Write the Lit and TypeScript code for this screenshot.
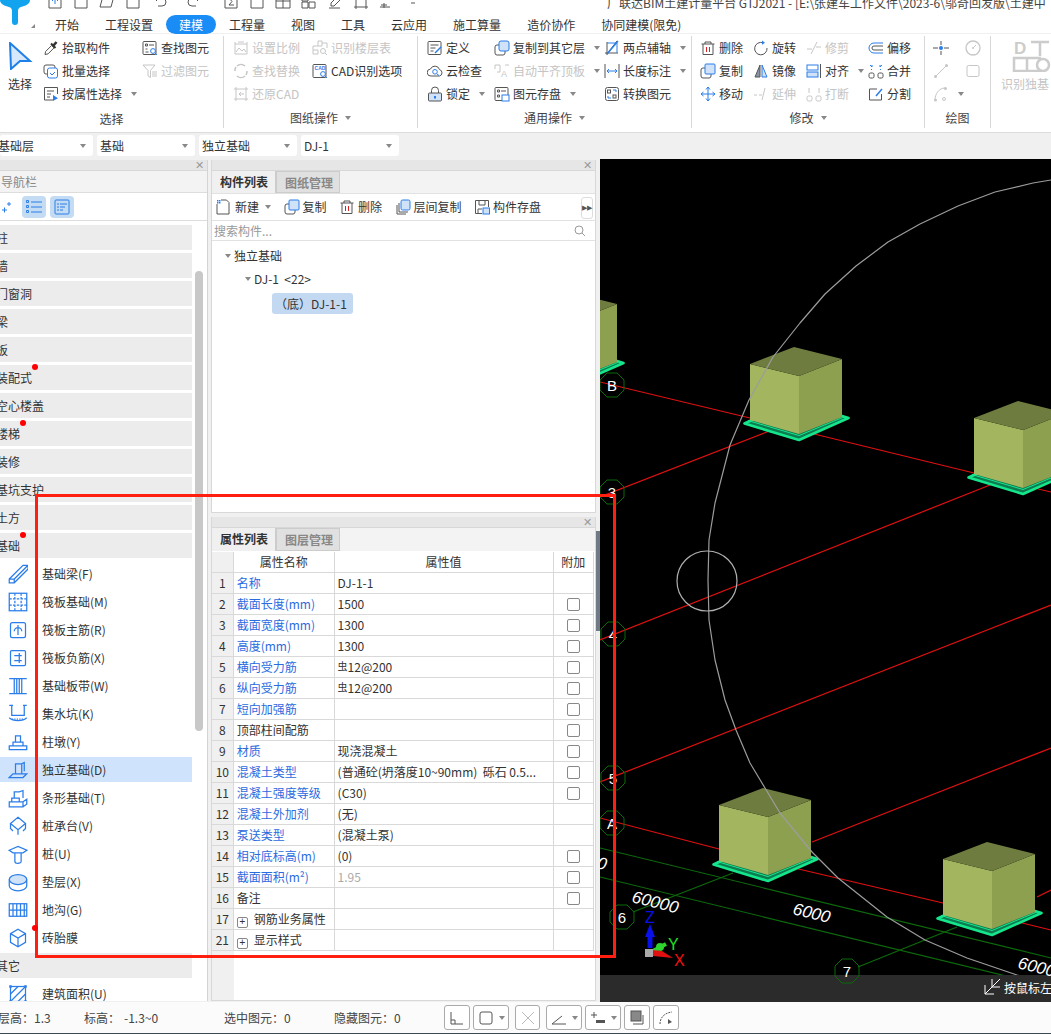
import { LitElement, html, css, svg } from "lit";
import { customElement } from "lit/decorators.js";

const B = "#2b7de9", D = "#555", G = "#c6c6c6", L = "#cfe2f8";
const ic = (body: unknown, size = 16) => html`<svg class="i" width=${size} height=${size} viewBox="0 0 16 16">${body}</svg>`;

const icons: Record<string, unknown> = {
  pick: svg`<path d="M2 14.5l.6-3 6-6 2.4 2.4-6 6z" stroke=${D}/><path d="M8 3.5l4.5 4.5" stroke="#333" stroke-width="2"/><path d="M10.5 5.5l3-3.5" stroke="#333" stroke-width="2.6"/>`,
  batch: svg`<rect x="1" y="2" width="11" height="9" rx="2" stroke=${D}/><rect x="4.5" y="5" width="10" height="10" rx="2" fill="#fff" stroke=${B}/><path d="M7 10l2 2 3-3" stroke=${B}/>`,
  prop: svg`<path d="M10 14H1.5V1.5h13V8" stroke=${D}/><path d="M4 5h7M4 8h4M4 11h3" stroke=${D}/><path d="M10 9l5 3.2-5 2.8z" fill=${B}/>`,
  find: svg`<rect x="1" y="1.5" width="13" height="13" rx="1" stroke=${D}/><path d="M3.5 4h2v2h-2zM7 5h5M3.5 9h2M3.5 12h3" stroke=${D}/><circle cx="11" cy="11" r="2.4" fill="#fff" stroke=${B}/><path d="M13 13l2 2" stroke=${B}/>`,
  filter: svg`<path d="M1 2h12L8.5 7.5v7L6 13V7.5z" stroke=${G}/><path d="M10 9h5M10 11h5M10 13h5" stroke=${G}/>`,
  scale: svg`<path d="M2 4h12v10H2zM2 2v2M14 2v2M5 2h6" stroke=${G}/><path d="M3 12l3-4 3 3 2-2 2 3" stroke=${G}/>`,
  layer: svg`<path d="M1 14V6h5M1 10h5v4H1M6 1h4v5H6zM10 3h5v5" stroke=${G}/><circle cx="11" cy="11" r="2.5" stroke=${G}/><path d="M13 13l2 2" stroke=${G}/>`,
  rep: svg`<path d="M12 3a6 6 0 0 0-8 0M4 13a6 6 0 0 0 8 0M2 8a6 6 0 0 1 1-4M14 8a6 6 0 0 1-1 4" stroke=${G} stroke-width="1.5"/>`,
  cadopt: svg`<rect x="1" y="1.5" width="13" height="13" rx="1" stroke=${D}/><text x="2.6" y="7" font-size="5" font-weight="700" fill=${B} stroke="none" font-family="Liberation Sans">CAD</text><circle cx="11" cy="11" r="2.4" fill="#fff" stroke=${B}/><path d="M13 13l2 2" stroke=${B}/>`,
  restore: svg`<path d="M3 1v14M13 1v14M1 3h14M1 13h14" stroke=${G}/><path d="M11 8H6l2-2M6 8l2 2" stroke=${G}/>`,
  define: svg`<rect x="1" y="1.5" width="13" height="13" rx="1" stroke=${D}/><path d="M3.5 5h8M3.5 8h5M3.5 11h3" stroke=${D}/><path d="M8 13l6-6" stroke=${B} stroke-width="1.5"/>`,
  cloud: svg`<path d="M4 13a3.5 3.5 0 0 1-.5-7 4.8 4.8 0 0 1 9 .6A3.3 3.3 0 0 1 12.5 13z" stroke=${D}/><circle cx="8" cy="8.8" r="2.3" stroke=${B}/><path d="M10 11l2 1.5" stroke=${B}/>`,
  lock: svg`<rect x="1.5" y="7" width="13" height="8" rx="1" fill=${L} stroke=${D}/><path d="M4.5 7V4.5a3.5 3.5 0 0 1 7 0V7" stroke=${D}/><path d="M8 10v2.5" stroke=${B} stroke-width="2"/>`,
  copyto: svg`<rect x="1" y="5" width="10" height="10" rx="2" stroke=${D}/><rect x="5" y="1" width="10" height="10" rx="2" fill=${L} stroke=${B}/>`,
  autotop: svg`<path d="M1 2h5v7M11 2h4M1 2v4M3 9h3" stroke=${G}/><text x="7" y="14" font-size="9" fill=${G} stroke="none" font-family="Liberation Sans">A</text>`,
  store: svg`<rect x="1" y="1.5" width="13" height="13" rx="1" stroke=${D}/><path d="M3.5 4h2v2h-2zM7 5h5M3.5 9h2v2h-2z" stroke=${D}/><rect x="8" y="9" width="7" height="6" fill="#fff" stroke=${B}/>`,
  axis2: svg`<path d="M1 13h13M3 2v13M13 1L3 14" stroke=${D}/><path d="M3 14L14 1" stroke=${B} stroke-width="1.5"/><path d="M3 3h10v10" stroke=${B}/>`,
  dim: svg`<path d="M1 1v14M15 1v14" stroke=${D}/><path d="M3 8h10M3 8l2-2M3 8l2 2M13 8l-2-2M13 8l-2 2" stroke=${B}/>`,
  conv: svg`<rect x="1.5" y="1.5" width="13" height="13" rx="2" stroke=${D}/><rect x="3.5" y="4" width="3" height="3" stroke=${D}/><rect x="9" y="9" width="3" height="3" stroke=${D}/><path d="M9 4h3v2M7 12H4v-2" stroke=${B}/>`,
  del: svg`<path d="M1.5 4h13M5 4V2h6v2M3 4v10.5h10V4" stroke=${D}/><path d="M6.5 7v5M9.5 7v5" stroke="#d22"/>`,
  rot: svg`<path d="M10 2.8A6.2 6.2 0 1 0 14 8" stroke=${D}/><path d="M9 .5l3 2.3-3 2z" fill=${B}/>`,
  trim: svg`<path d="M1 9h5M10 7h5M5 14L11 2" stroke=${G}/>`,
  offs: svg`<path d="M15 3H6a5 5 0 0 0 0 10h9" stroke=${B}/><path d="M15 6H6a2 2 0 0 0 0 4h9" stroke=${D}/>`,
  copy: svg`<rect x="1" y="5" width="10" height="10" rx="2" stroke=${D}/><rect x="5" y="1" width="10" height="10" rx="1" fill=${L} stroke=${B}/>`,
  mirror: svg`<path d="M7 2L2 14h5z" fill="#8894a8" stroke=${D}/><path d="M9 2l5 12H9z" fill=${L} stroke=${B}/>`,
  align: svg`<path d="M14.5 1v14" stroke=${D}/><rect x="1" y="2" width="11" height="5" stroke=${B}/><rect x="1" y="9" width="11" height="5" fill=${L} stroke=${B}/>`,
  merge: svg`<rect x="1" y="10" width="5" height="5" rx="1.5" stroke=${D}/><rect x="10" y="10" width="5" height="5" rx="1.5" stroke=${D}/><path d="M2 2l2 2v-2M14 2l-2 2v-2" stroke=${B}/><path d="M3 6.5h1M12 6.5h1" stroke=${B}/>`,
  move: svg`<path d="M8 1v14M1 8h14M8 1L6 3.5M8 1l2 2.5M8 15l-2-2.5M8 15l2-2.5M1 8l2.5-2M1 8l2.5 2M15 8l-2.5-2M15 8l-2.5 2" stroke=${B}/>`,
  ext: svg`<path d="M1 9h3M6 9h3M12 2L9 14" stroke=${G}/>`,
  brk: svg`<rect x="1" y="10" width="5" height="5" rx="1.5" stroke=${G}/><rect x="10" y="10" width="5" height="5" rx="1.5" stroke=${G}/><path d="M3 2v5M13 2v5" stroke=${G}/>`,
  split: svg`<path d="M9 3H1.5v11h12V8" stroke=${D}/><path d="M8 10l6-7" stroke=${B} stroke-width="1.5"/>`,
  point: svg`<path d="M0 8h5M11 8h5M8 1v4M8 11v4" stroke=${D}/><circle cx="8" cy="8" r="2" fill=${B}/>`,
  clock: svg`<circle cx="8" cy="8" r="7" stroke=${G} stroke-width="1.3"/><path d="M8 8l3-3" stroke=${G}/><circle cx="8" cy="8" r="1" fill=${G}/>`,
  lineg: svg`<path d="M2 14L14 2" stroke=${G}/><circle cx="2.5" cy="13.5" r="1.5" fill=${G}/><circle cx="13.5" cy="2.5" r="1.5" fill=${G}/>`,
  rectg: svg`<rect x="2" y="2.5" width="12" height="11" rx="1.5" stroke=${G}/>`,
  arcg: svg`<path d="M2 14C2 8 6 2 12 2" stroke=${G}/><circle cx="2.5" cy="14" r="1.5" fill=${G}/><circle cx="12.5" cy="2.5" r="1.5" fill=${G}/><circle cx="11" cy="13" r="1.5" stroke=${G}/>`,
  newf: svg`<path d="M1 5v10h12V3.5L10.5 1H5" stroke=${D}/><path d="M1 1h1.5v1.5H1zM3 1h1.5v1.5H3zM1 3h1.5v1.5H1zM3 3h1.5v1.5H3z" fill=${B}/>`,
  lcopy: svg`<path d="M2 6v9h9M4 4v9h9" stroke=${D}/><rect x="6" y="1" width="9" height="10" rx="1.5" fill=${L} stroke=${B}/>`,
  cstore: svg`<path d="M8 14.5H1.5v-13h13V8M5 1.5V6h6V1.5M4 14v-4h4" stroke=${D}/><rect x="9" y="9" width="6.5" height="6" fill=${L} stroke=${B}/>`,
};

const N: Record<string, unknown> = {
  beam: svg`<path d="M1 12L12 1h4v3L5 15H1zM1 12h4v3M5 12L16 1" stroke=${B}/>`,
  raft: svg`<rect x="1" y="1" width="14" height="14" stroke=${B}/><path d="M1 5.5h14M1 10.5h14M5.5 1v14M10.5 1v14" stroke=${B} stroke-dasharray="2 1"/>`,
  rmain: svg`<rect x="2" y="2" width="12" height="12" rx="1.5" stroke=${B}/><path d="M8 4v8M5 9a3 3 0 1 1 6 0" stroke=${B}/>`,
  rneg: svg`<rect x="2" y="2" width="12" height="12" rx="1" stroke=${B}/><path d="M5 6h6M5 10h6M9 4v8" stroke=${B}/>`,
  strip: svg`<path d="M1 2h14M1 14h14M5 2v12M11 2v12M7 2v12M9 2v12" stroke=${B}/>`,
  pit: svg`<path d="M3 1v8h10V1M1 1h3M12 1h3M1 11c3 3 11 3 14 0" stroke=${B}/><path d="M3 12h10" stroke=${B} stroke-dasharray="1 1"/>`,
  pier: svg`<path d="M1 14h14v-3H1zM4 11V8h8v3M6 8V3h4v5" stroke=${B}/>`,
  ind: svg`<path d="M1 14l3-3h11l-3 3zM6 11V3h5v8M11 3l2-1v7" stroke=${B} fill=${L}/>`,
  str: svg`<path d="M1 15V11h11v4zM12 11l3-2v4l-3 2M3 11V8h6v3M5 8V3h4l3-1v6" stroke=${B}/>`,
  cap: svg`<path d="M8 1l6 5-6 5-6-5zM2 6v4l2 2M14 6v4l-2 2M8 11v4" stroke=${B}/>`,
  pile: svg`<path d="M1 5l7-3 7 3-3 2H4zM5.5 7v7a2.5 1.5 0 0 0 5 0V7" stroke=${B}/>`,
  pad: svg`<ellipse cx="8" cy="6" rx="7" ry="4" fill=${L} stroke=${B}/><path d="M1 6v5c0 2 3 4 7 4s7-2 7-4V6" stroke=${B}/>`,
  ditch: svg`<rect x="1" y="3" width="14" height="10" stroke=${B}/><path d="M1 8h14M4 3v10M7 3v10M10 3v10M13 3v10" stroke=${B}/>`,
  brick: svg`<path d="M8 1l6 3.5v7L8 15l-6-3.5v-7zM2 4.5l6 3.5 6-3.5M8 8v7" stroke=${B}/>`,
  area: svg`<rect x="2" y="2" width="12" height="12" stroke=${B}/><path d="M2 8l6-6M2 14L14 2M8 14l6-6" stroke=${B}/><path d="M1 1h2v2H1zM13 1h2v2h-2zM1 13h2v2H1zM13 13h2v2h-2z" fill=${B}/>`,
};

type It = [string, string, boolean?, boolean?];
const groups: { cls: string; label: string; caret?: boolean; items: (It | null)[] }[] = [
  { cls: "g1", label: "选择", items: [["pick", "拾取构件"], ["find", "查找图元"], ["batch", "批量选择"], ["filter", "过滤图元", true], ["prop", "按属性选择", false, true], null] },
  { cls: "g2", label: "图纸操作", caret: true, items: [["scale", "设置比例", true], ["layer", "识别楼层表", true], ["rep", "查找替换", true], ["cadopt", "CAD识别选项"], ["restore", "还原CAD", true], null] },
  { cls: "g3", label: "通用操作", caret: true, items: [["define", "定义"], ["copyto", "复制到其它层", false, true], ["axis2", "两点辅轴", false, true], ["cloud", "云检查"], ["autotop", "自动平齐顶板", true, true], ["dim", "长度标注", false, true], ["lock", "锁定", false, true], ["store", "图元存盘", false, true], ["conv", "转换图元"]] },
  { cls: "g4", label: "修改", caret: true, items: [["del", "删除"], ["rot", "旋转"], ["trim", "修剪", true], ["offs", "偏移"], ["copy", "复制"], ["mirror", "镜像"], ["align", "对齐", false, true], ["merge", "合并"], ["move", "移动"], ["ext", "延伸", true], ["brk", "打断", true], ["split", "分割"]] },
];

const cats1 = ["柱", "墙", "门窗洞", "梁", "板", "装配式", "空心楼盖", "楼梯", "装修", "基坑支护", "土方", "基础"];
const dotted = new Set(["装配式", "楼梯", "基础"]);
const subs: [string, string][] = [["beam", "基础梁(F)"], ["raft", "筏板基础(M)"], ["rmain", "筏板主筋(R)"], ["rneg", "筏板负筋(X)"], ["strip", "基础板带(W)"], ["pit", "集水坑(K)"], ["pier", "柱墩(Y)"], ["ind", "独立基础(D)"], ["str", "条形基础(T)"], ["cap", "桩承台(V)"], ["pile", "桩(U)"], ["pad", "垫层(X)"], ["ditch", "地沟(G)"], ["brick", "砖胎膜"]];

type Row = [string, string, string, boolean, string?];
const rows: Row[] = [
  ["1", "名称", "DJ-1-1", false, "b"], ["2", "截面长度(mm)", "1500", true, "b"], ["3", "截面宽度(mm)", "1300", true, "b"], ["4", "高度(mm)", "1300", true, "b"],
  ["5", "横向受力筋", "#12@200", true, "b"], ["6", "纵向受力筋", "#12@200", true, "b"], ["7", "短向加强筋", "", true, "b"], ["8", "顶部柱间配筋", "", true],
  ["9", "材质", "现浇混凝土", true, "b"], ["10", "混凝土类型", "(普通砼(坍落度10~90mm)\u00a0\u00a0砾石 0.5...", true, "b"], ["11", "混凝土强度等级", "(C30)", true, "b"], ["12", "混凝土外加剂", "(无)", false, "b"],
  ["13", "泵送类型", "(混凝土泵)", false, "b"], ["14", "相对底标高(m)", "(0)", true, "b"], ["15", "截面面积(m²)", "~1.95", true, "b"], ["16", "备注", "", true],
  ["17", "+钢筋业务属性", "", false], ["21", "+显示样式", "", false],
];

const box = (dx: number, dy: number) => svg`<g transform="translate(${dx} ${dy})">
  <polygon points="744.5,423.5 799,440 848.5,418 793,401" fill="#0d7a50" stroke="#15e68c" stroke-width="2.6" stroke-linejoin="round"/>
  <polyline points="748,420.5 799,435.5 845,416.5" fill="none" stroke="#15e68c" stroke-width="1"/>
  <polygon points="750,364 799,376 799,434 750,420" fill="#a3b55f"/>
  <polygon points="799,376 842,359 842,417 799,434" fill="#8da050"/>
  <polygon points="750,364 794,347 842,359 799,376" fill="#6f7c3f"/></g>`;
const axis = (x: number, y: number, t: string) => svg`<polygon points="${x - 12},${y - 5} ${x - 5},${y - 12} ${x + 5},${y - 12} ${x + 12},${y - 5} ${x + 12},${y + 5} ${x + 5},${y + 12} ${x - 5},${y + 12} ${x - 12},${y + 5}" fill="none" stroke="#0b6a0b"/><text x=${x} y=${y + 6} class="lab" text-anchor="middle">${t}</text>`;

@customElement("app-root")
export class AppRoot extends LitElement {
  static styles = css`
    :host { display:block; position:relative; width:1051px; height:1034px; overflow:hidden; background:#f0f0f0; font:12px/16px "Noto Sans CJK SC","Liberation Sans",sans-serif; color:#333; }
    .i { fill:none; flex:none; display:block; }
    .head { display:grid; grid-template-columns:42px 1fr; grid-template-rows:15px 18px; background:#fff; height:33px; }
    .logo { grid-row:1 / 3; overflow:hidden; }
    .qa { display:flex; height:15px; overflow:hidden; }
    .qaicons { display:flex; gap:10px; width:565px; padding-left:5px; margin-top:-6px; box-sizing:border-box; flex:none; }
    .qaicons .wide { margin-right:10px; }
    .title { white-space:nowrap; margin-top:-5px; line-height:16px; color:#444; }
    .tabs { display:flex; }
    .tab { padding:0 13px; line-height:19px; height:19px; border-radius:10px; color:#333; white-space:nowrap; position:relative; z-index:1; }
    .tab.on { background:#1a8cf5; color:#fff; }
    .ribbon { height:98px; background:#fff; display:flex; border-bottom:1px solid #dcdcdc; border-top:1px solid #f0f0f0; overflow:hidden; }
    .group { flex:none; position:relative; box-sizing:border-box; height:92px; margin-top:2px; border-right:1px solid #d8d8d8; display:flex; flex-direction:column; }
    .cols { display:grid; grid-auto-rows:23px; height:72px; padding-top:0; }
    .lbl { text-align:center; display:flex; justify-content:center; align-items:center; gap:5px; height:22px; margin-top:2px; color:#444; font-size:12px; }
    .g0 { width:224px; } .g2 { width:194px; } .g3 { width:274px; } .g4 { width:233px; } .g5 { width:66px; } .g6 { width:60px; border:none; }
    .g1body { display:flex; }
    .bigsel { width:44px; display:flex; flex-direction:column; align-items:flex-start; padding-left:8px; box-sizing:border-box; }
    .bigsel svg { margin-left:1px; margin-top:6px; }
    .bigsel span { margin-top:6px; }
    .g1 { grid-template-columns:99px 81px; }
    .g2 .cols { grid-template-columns:79px 105px; padding-left:9px; }
    .g3 .cols { grid-template-columns:67px 110px 88px; padding-left:9px; }
    .g4 .cols { grid-template-columns:53px 53px 62px 60px; padding-left:8px; }
    .g5 .cols { grid-template-columns:32px 32px; padding-left:8px; }
    .g5 .cols > * { align-self:center; }
    .item { display:flex; align-items:center; gap:3px; white-space:nowrap; color:#333; }
    .item.off { color:#c4c4c4; }
    .car { width:0; height:0; border-left:3.5px solid transparent; border-right:3.5px solid transparent; border-top:4px solid #888; flex:none; margin-left:6px; }
    .lbl .car { margin-left:2px; }
    .g6 { align-items:flex-start; padding-left:10px; color:#c4c4c4; overflow:hidden; white-space:nowrap; }
    .g6 svg { margin:4px 0 4px 2px; }
    .bar { height:24px; padding-top:2px; box-sizing:content-box; display:flex; gap:4px; background:#f0f0f0; }
    .combo { background:#fff; border-radius:3px; width:98px; height:21px; box-sizing:border-box; display:flex; align-items:center; justify-content:space-between; padding:0 7px 0 3px; }
    .combo.first { width:93px; margin-right:0; padding-left:0; text-indent:-2px; }
    .body { display:flex; height:843px; padding-top:1px; box-sizing:border-box; }
    .left { width:207px; flex:none; border-right:1px solid #d4d4d4; display:flex; flex-direction:column; background:#fff; height:841px; }
    .gut { width:3px; flex:none; }
    .pbar { height:10px; background:#e6e6e6; display:flex; justify-content:flex-end; align-items:center; padding-right:3px; color:#999; font-size:11px; line-height:10px; flex:none; border-bottom:1px solid #d8d8d8; font-family:"Liberation Sans",sans-serif; }
    .navh { height:21px; line-height:21px; background:#f3f3f3; color:#888; text-indent:1px; border-bottom:1px solid #ddd; flex:none; font-size:12px; }
    .navt { height:27px; border-bottom:1px solid #ddd; display:flex; align-items:center; gap:4px; padding-left:1px; flex:none; box-sizing:content-box; }
    .navb { width:24px; height:22px; background:#c3dbf3; border-radius:4px; display:flex; align-items:center; justify-content:center; }
    .plus { width:17px; }
    .listw { flex:1; display:flex; overflow:hidden; padding-top:4px; }
    .list { width:192px; flex:none; display:flex; flex-direction:column; gap:3px; }
    .cat { height:25px; line-height:25px; background:#ececec; text-indent:-4px; flex:none; position:relative; white-space:nowrap; }
    .dot { position:absolute; width:6px; height:6px; border-radius:3px; background:#f00; top:-1px; }
    .sub { height:25px; flex:none; display:flex; align-items:center; gap:14px; padding-left:8px; position:relative; }
    .sub.on { background:#cfe4fc; }
    .track { width:8px; margin-left:3px; padding-top:46px; flex:none; }
    .thumb { height:460px; background:#c8c8c8; border-radius:4px; }
    .mid { width:385px; flex:none; display:flex; flex-direction:column; gap:4px; height:841px; }
    .panel { background:#fff; border:1px solid #d8d8d8; border-top:none; box-sizing:border-box; display:flex; flex-direction:column; }
    .p1 { height:353px; } .p2 { height:484px; }
    .tabsb { height:22px; display:flex; background:#f3f3f3; flex:none; }
    .p2 .tabsb { height:23px; }
    .tb { width:64px; box-sizing:border-box; padding-left:8px; line-height:21px; font-weight:700; border-right:1px solid #ccc; border-bottom:1px solid #ddd; }
    .tb.on { background:#f0f0f0; color:#333; border-bottom:none; }
    .tb.off { background:#e0e0e0; color:#888; border:1px solid #ccc; }
    .tools { height:28px; display:flex; align-items:center; gap:12.5px; padding-left:4px; border-bottom:1px solid #e2e2e2; flex:none; position:relative; border-top:1px solid #e2e2e2; box-sizing:border-box; }
    .tools .car { margin-left:3px; }
    .more { position:absolute; right:2px; top:3px; width:10px; height:20px; border:1px solid #ddd; border-radius:3px; color:#555; font-size:7px; line-height:20px; text-align:center; font-family:"Liberation Sans",sans-serif; }
    .search { height:19px; line-height:18px; color:#999; border-bottom:1px solid #e2e2e2; display:flex; justify-content:space-between; align-items:center; padding:0 9px 0 2px; flex:none; }
    .tree { padding-top:3px; display:flex; flex-direction:column; }
    .tr { height:23px; display:flex; align-items:center; gap:3px; white-space:nowrap; }
    .tr .car { margin:0; }
    .tr1 { padding-left:13px; } .tr2 { padding-left:33px; }
    .sel { margin-left:60px; width:81px; height:21px; line-height:21px; border-radius:3px; background:#c3d9f2; box-sizing:border-box; padding-left:3px; margin-top:3px; white-space:nowrap; }
    .tw { flex:1; display:flex; flex-direction:column; padding-right:2px; padding-top:1px; min-height:0; }
    table { border-collapse:collapse; table-layout:fixed; width:382px; flex:none; }
    td,th { border:1px solid #d9d9d9; font-weight:400; height:20px; padding:0; line-height:16px; white-space:nowrap; overflow:hidden; box-sizing:content-box; }
    thead th { height:20px; border-top:none; }
    td:first-child,th:first-child { background:#f0f0f0; text-align:center; border-left:none; }
    .nm { padding-left:3px; } .nm.b { color:#2b6be0; }
    .vl { padding-left:3px; } .vl.dim { color:#aaa; }
    .rb { font-size:10px; position:relative; top:-2px; }
    .ck { width:13px; height:13px; border:1px solid #888; border-radius:2px; background:#fff; margin:0 auto; box-sizing:border-box; }
    .pl { display:inline-block; width:11px; height:11px; border:1px solid #888; border-radius:2px; box-sizing:border-box; text-align:center; line-height:8px; font-size:10px; margin-right:6px; vertical-align:-1px; font-family:"Liberation Sans",sans-serif; }
    .tail { flex:1; width:22px; background:#f0f0f0; }
    .split { width:4px; flex:none; padding-top:371px; box-sizing:border-box; }
    .sthumb { height:100px; background:#6f7a86; position:relative; }
    .canvas { flex:none; width:451px; height:843px; display:block; margin-top:-1px; background:#000; }
    .lab { fill:#fff; font:15px "Liberation Sans",sans-serif; }
    .dimt { fill:#fff; font:italic 17px "Liberation Sans",sans-serif; }
    .gz { font:16px "Liberation Sans",sans-serif; }
    .hint { fill:#fff; font:12px "Noto Sans CJK SC",sans-serif; }
    .status { height:32px; background:#fbfbfb; border-bottom:1px solid #3a4a55; box-sizing:border-box; display:flex; align-items:center; white-space:nowrap; position:relative; }
    .st { color:#444; flex:none; }
    .st:nth-child(1) { width:34px; text-indent:-2px; } .st:nth-child(2) { width:50px; } .st:nth-child(3) { width:40px; } .st:nth-child(4) { width:100px; }
    .st:nth-child(5) { width:60px; } .st:nth-child(6) { width:50px; } .st:nth-child(7) { width:60px; } .st:nth-child(8) { width:50px; }
    .sb { height:25px; border:1px solid #aaa; border-radius:3px; box-sizing:border-box; display:flex; align-items:center; justify-content:center; gap:5px; flex:none; background:#fff; margin-right:3px; }
    .sb .car { margin:0; }
    .w1 { width:26px; } .w2 { width:36px; } .w3 { width:25px; margin-left:3px; margin-right:6px; } .w4 { width:36px; }
    .ann { position:absolute; left:35px; top:494px; width:581px; height:464px; box-sizing:border-box; border:3px solid #ff1e0f; pointer-events:none; }
    .annd { position:absolute; left:32px; top:925px; width:6px; height:6px; border-radius:3px; background:#f00; }
  `;

  private it(x: It | null) {
    if (!x) return html`<div></div>`;
    const [k, t, off, car] = x;
    return html`<div class="item ${off ? "off" : ""}">${ic(icons[k])}<span>${t}</span>${car ? html`<i class="car"></i>` : ""}</div>`;
  }

  render() {
    const qa = ["M2 1h12v13H2z|M8 10V5M5 7l3-3 3 3", "M2 1h12v13H2z", "M1 13l3-11h11l-3 11z", "M2 1h12v13H2z", "M3 4h8a3 3 0 0 1 0 8H7M3 4l3-3M3 4l3 3", "M13 4H5a3 3 0 0 0 0 8h4M13 4l-3-3M13 4l-3 3", "M2 1h12v13H2zM11 4H6l3 3.5L6 11h5", "M2 1h12v13H2zM5 5h6|", "M1 1h14v13H1zM1 7h14M8 1v13", "M1 1h6v6H1zM1 8h6v6H1zM8 8h6v6H8z", "M2 14h11M11 2l3 3-7 7-3 0 0-3z", "M3 1v14M13 1v14M1 3h14M1 13h14", "M3 1h9v3M1 13h10M5 9v5M2 11h6", "M4 5h8M6 9h4"];
    return html`
      <div class="head">
        <div class="logo"><svg width="42" height="33" viewBox="0 0 42 33"><path d="M0 0h30c0 4-5 6-9 7-2 .5-3 2-3 4v11c0 2-1 3-3 3s-3-1-3-3V11c0-2-1-3.5-3-4C5 6 0 4 0 0z" fill="#12a3ee"/><path d="M35 24v4h-4z" fill="#888"/></svg></div>
        <div class="qa">
          <div class="qaicons">${qa.map((d, i) => html`<svg class="i ${i === 4 || i === 5 ? "wide" : ""}" width="16" height="16" viewBox="0 0 16 16"><path d=${d.split("|")[0]} stroke="#555"/><path d=${d.split("|")[1] || ""} stroke=${B}/></svg>`)}</div>
          <div class="title">广联达BIM土建计量平台 GTJ2021 - [E:\\张建车工作文件\\2023-6\\邬奇回发版\\土建中</div>
        </div>
        <div class="tabs">${["开始", "工程设置", "建模", "工程量", "视图", "工具", "云应用", "施工算量", "造价协作", "协同建模(限免)"].map((t) => html`<div class="tab ${t === "建模" ? "on" : ""}">${t}</div>`)}</div>
      </div>
      <div class="ribbon">
        <div class="group g0">
          <div class="g1body">
            <div class="bigsel"><svg class="i" width="24" height="28" viewBox="0 0 24 28"><path d="M1 1l20 18h-10l-9 8z" fill="#d6e8fb" stroke="#1f7fe8" stroke-width="2"/></svg><span>选择</span></div>
            <div class="cols g1">${groups[0].items.map((x) => this.it(x))}</div>
          </div>
          <div class="lbl">选择</div>
        </div>
        ${groups.slice(1).map((g) => html`<div class="group ${g.cls}"><div class="cols">${g.items.map((x) => this.it(x))}</div><div class="lbl">${g.label}${g.caret ? html`<i class="car"></i>` : ""}</div></div>`)}
        <div class="group g5"><div class="cols">
          ${ic(icons.point)}${ic(icons.clock)}${ic(icons.lineg)}${ic(icons.rectg)}<div class="item">${ic(icons.arcg)}<i class="car"></i></div><div></div>
        </div><div class="lbl">绘图</div></div>
        <div class="group g6">
          <svg class="i" width="48" height="32" viewBox="0 0 48 32"><text x="11" y="14" font-size="17" font-weight="700" fill="#ccc" font-family="Liberation Sans">D</text><path d="M28 2h18M37 2v14M11 18h26v13H11zM24 18v13" stroke="#ccc" stroke-width="2.5"/><circle cx="40" cy="25" r="6" stroke="#ccc" stroke-width="2.5" fill="#fff"/></svg>
          <span>识别独基</span>
        </div>
      </div>
      <div class="bar">
        ${[["基础层", "first"], ["基础", ""], ["独立基础", ""], ["DJ-1", ""]].map(([t, c]) => html`<div class="combo ${c}"><span>${t}</span><i class="car"></i></div>`)}
      </div>
      <div class="body">
        <div class="left">
          <div class="pbar">✕</div>
          <div class="navh">导航栏</div>
          <div class="navt">
            <svg class="i plus" width="17" height="16" viewBox="0 0 17 16"><path d="M1 11h5M3.5 8.5v5M6 5h4M8 3v4" stroke=${B}/></svg>
            <div class="navb"><svg class="i" width="16" height="14" viewBox="0 0 16 14"><path d="M5 2h11M5 7h11M5 12h11" stroke=${B}/><path d="M0.5 0.5h2v2h-2zM0.5 5.5h2v2h-2zM0.5 10.5h2v2h-2z" stroke=${B}/></svg></div>
            <div class="navb"><svg class="i" width="16" height="16" viewBox="0 0 16 16"><rect x="1" y="1" width="14" height="14" rx="1" stroke=${B}/><path d="M3 5h2M6 5h7M3 8h2M6 8h5M3 11h2M6 11h3" stroke=${B}/></svg></div>
          </div>
          <div class="listw">
            <div class="list">
              ${cats1.map((c) => html`<div class="cat">${c}${dotted.has(c) ? html`<i class="dot" style="left:${c === "装配式" ? 32 : 20}px"></i>` : ""}</div>`)}
              ${subs.map(([k, t]) => html`<div class="sub ${t.startsWith("独立") ? "on" : ""}">${ic(N[k], 20)}<span>${t}</span></div>`)}
              <div class="cat">其它</div>
              <div class="sub">${ic(N.area, 20)}<span>建筑面积(U)</span></div>
            </div>
            <div class="track"><div class="thumb"></div></div>
          </div>
        </div>
        <div class="gut"></div>
        <div class="mid">
          <div class="panel p1">
            <div class="pbar">✕</div>
            <div class="tabsb"><div class="tb on">构件列表</div><div class="tb off">图纸管理</div></div>
            <div class="tools">
              <div class="item">${ic(icons.newf)}<span>新建</span><i class="car"></i></div>
              <div class="item">${ic(icons.copy)}<span>复制</span></div>
              <div class="item">${ic(icons.del)}<span>删除</span></div>
              <div class="item">${ic(icons.lcopy)}<span>层间复制</span></div>
              <div class="item">${ic(icons.cstore)}<span>构件存盘</span></div>
              <div class="more">▶▶</div>
            </div>
            <div class="search"><span>搜索构件...</span><svg class="i" width="12" height="12" viewBox="0 0 12 12"><circle cx="5" cy="5" r="4" stroke="#999"/><path d="M8 8l3 3" stroke="#999"/></svg></div>
            <div class="tree">
              <div class="tr tr1"><i class="car"></i><span>独立基础</span></div>
              <div class="tr tr2"><i class="car"></i><span>DJ-1&nbsp;&nbsp;&lt;22&gt;</span></div>
              <div class="sel">（底）DJ-1-1</div>
            </div>
          </div>
          <div class="panel p2">
            <div class="pbar">✕</div>
            <div class="tabsb"><div class="tb on">属性列表</div><div class="tb off">图层管理</div></div>
            <div class="tw">
              <table>
                <colgroup><col style="width:21px"/><col style="width:100px"/><col style="width:217px"/><col style="width:40px"/></colgroup>
                <thead><tr><th></th><th>属性名称</th><th>属性值</th><th>附加</th></tr></thead>
                <tbody>${rows.map(([n, name, val, c, b]) => html`<tr><td>${n}</td>
                  <td class="nm ${b || ""}">${name.startsWith("+") ? html`<i class="pl">+</i>${name.slice(1)}` : name}</td>
                  <td class="vl ${val.startsWith("~") ? "dim" : ""}">${val.startsWith("#") ? html`<span class="rb">虫</span>${val.slice(1)}` : val.replace(/^~/, "")}</td>
                  <td>${c ? html`<div class="ck"></div>` : ""}</td></tr>`)}</tbody>
              </table>
              <div class="tail"></div>
            </div>
          </div>
        </div>
        <div class="split"><div class="sthumb"></div></div>
        <svg class="canvas" viewBox="600 159 451 843" width="451" height="843">
          <g fill="none" stroke="#e01010" stroke-width="1.2">
            <path d="M600 382L750 418M810 433L974 473M1030 487L1051 492"/>
            <path d="M600 497L772 430"/>
            <path d="M600 640L995 483"/>
            <path d="M600 782L1051 605"/>
            <path d="M812 842L1051 748"/>
            <path d="M600 818L719 849M790 867L943 903M1018 922L1051 930"/>
            <path d="M1037 897L1051 890"/>
          </g>
          <g fill="none" stroke="#0c6a0c" stroke-width="1.2">
            <path d="M600 848L1051 958"/>
            <path d="M600 877L1051 987"/>
            <path d="M633 912L733 873"/>
            <path d="M858 967L957 927"/>
          </g>
          ${box(-225, -55)}${box(0, 0)}${box(224, 54)}${box(-31, 441)}${box(193, 495)}
          <polyline fill="none" stroke="#9c9c9c" stroke-width="1.2" stroke-linejoin="round" points="1051,180 1033,183 995,192 958,206 920,224 888,242 856,266 825,294 800,323 773,357 749,400 730,445 715,503 709,540 708,580 709,620 715,660 725,700 736,730 750,763 765,788 780,813 812,852 838,878 887,917 925,940 967,958 1017,975 1051,983"/>
          <circle cx="707" cy="581" r="30" fill="none" stroke="#b0b0b0" stroke-width="1.2"/>
          <rect x="600" y="975" width="451" height="27" fill="#2b2b2b"/>
          ${axis(612, 385, "B")}${axis(612, 492, "3")}${axis(613, 634, "4")}${axis(613, 778, "5")}${axis(612, 823, "A")}${axis(622, 917, "6")}${axis(847, 971, "7")}
          <text class="dimt" transform="translate(631 902) rotate(14)">60000</text>
          <text class="dimt" transform="translate(792 914) rotate(14)">6000</text>
          <text class="dimt" transform="translate(1017 968) rotate(14)">6000</text>
          <text class="dimt" transform="translate(596 868) rotate(14)">0</text>
          <path d="M650 948V936" stroke="#0a10e8" stroke-width="5"/><path d="M645 937l5-13 5 13z" fill="#0a10e8"/>
          <text class="gz" x="650" y="923" fill="#0a10e8" text-anchor="middle">Z</text>
          <path d="M653 951l13-7" stroke="#2fd42f" stroke-width="4"/><circle cx="660" cy="947" r="4" fill="#2fd42f"/>
          <text class="gz" x="668" y="950" fill="#22e022">Y</text>
          <path d="M652 950l10 1 11 7-20-2z" fill="#e01010"/><rect x="645" y="949" width="8" height="8" fill="#aaa"/>
          <text class="gz" x="674" y="966" fill="#f01010">X</text>
          <path d="M985 995l9-9M985 986v9h9M1000 980l-8 8M992 980v8h8" transform="translate(0 -1)" fill="none" stroke="#fff"/>
          <text class="hint" x="1004" y="993">按鼠标左键</text>
        </svg>
      </div>
      <div class="status">
        <span class="st">层高：</span><span class="st">1.3</span><span class="st">标高：</span><span class="st">-1.3~0</span>
        <span class="st">选中图元：</span><span class="st">0</span><span class="st">隐藏图元：</span><span class="st">0</span>
        <div class="sb w1"><svg class="i" width="14" height="14" viewBox="0 0 14 14"><path d="M1 1v12h12M1 9h4v4" stroke=${D}/></svg></div>
        <div class="sb w2"><svg class="i" width="16" height="16" viewBox="0 0 16 16"><rect x="2" y="2" width="12" height="12" rx="2" stroke=${D}/></svg><i class="car"></i></div>
        <div class="sb w3"><svg class="i" width="14" height="14" viewBox="0 0 14 14"><path d="M1 1l12 12M13 1L1 13" stroke="#bbb"/></svg></div>
        <div class="sb w4"><svg class="i" width="16" height="14" viewBox="0 0 16 14"><path d="M1 13h14M1 13l10-8" stroke=${D}/></svg><i class="car"></i></div>
        <div class="sb w4"><svg class="i" width="16" height="14" viewBox="0 0 16 14"><path d="M1 4h6M4 1v6" stroke=${D}/><rect x="6" y="9" width="9" height="3" fill=${D}/></svg><i class="car"></i></div>
        <div class="sb w1"><svg class="i" width="16" height="16" viewBox="0 0 16 16"><rect x="2" y="1" width="10" height="10" fill="#888" stroke=${D}/><path d="M14 5v9H4" stroke=${D}/></svg></div>
        <div class="sb w1"><svg class="i" width="16" height="16" viewBox="0 0 16 16"><path d="M2 14C2 8 6 3 14 2" stroke=${D} stroke-dasharray="2 1"/><path d="M10 9l4 3-4 2z" fill=${D}/></svg></div>
      </div>
      <div class="ann"></div><div class="annd"></div>
    `;
  }
}
